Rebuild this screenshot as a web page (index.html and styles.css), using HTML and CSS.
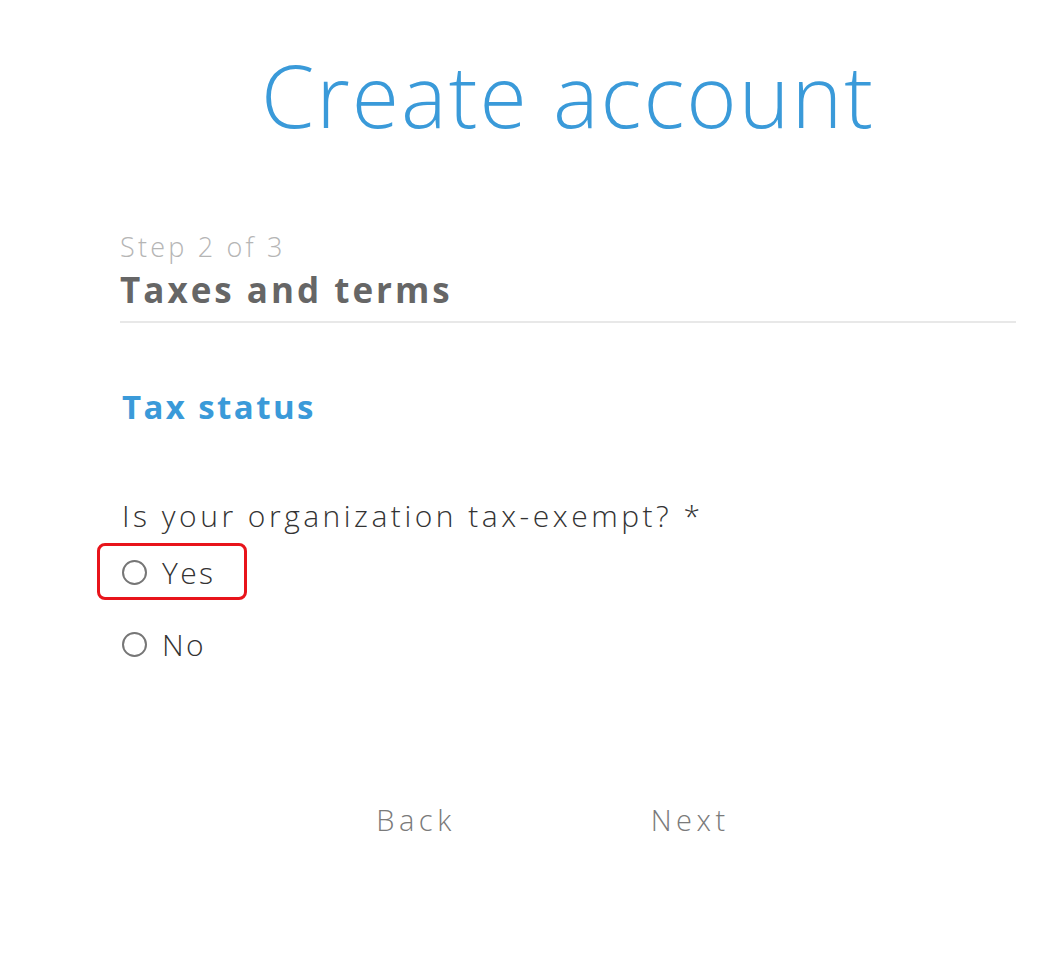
FILE: index.html
```html
<!DOCTYPE html>
<html lang="en">
<head>
<meta charset="utf-8">
<title>Create account</title>
<link rel="stylesheet" href="styles.css">
</head>
<body>
<main class="page">
  <h1 class="title">Create account</h1>
  <header class="step">
    <div class="step-count">Step 2 of 3</div>
    <h2 class="step-name">Taxes and terms</h2>
  </header>
  <section class="section">
    <h3 class="section-title">Tax status</h3>
    <fieldset class="question">
      <legend class="question-label">Is your organization tax-exempt? *</legend>
      <label class="option option-highlight"><span class="radio"></span><span class="option-text">Yes</span></label>
      <label class="option"><span class="radio"></span><span class="option-text">No</span></label>
    </fieldset>
  </section>
  <nav class="actions">
    <button class="btn" type="button">Back</button>
    <button class="btn" type="button">Next</button>
  </nav>
</main>
</body>
</html>
```

FILE: styles.css
```css
html, body {
  margin: 0;
  padding: 0;
  background: #ffffff;
}
body {
  font-family: "Open Sans", "Noto Sans", sans-serif;
  width: 1056px;
  height: 956px;
  overflow: hidden;
}
.page {
  margin-left: 120px;
  width: 896px;
  display: flex;
  flex-direction: column;
}
.title {
  margin: 40px 0 0;
  text-align: center;
  font-weight: 300;
  font-size: 86px;
  line-height: 110px;
  color: #3a9ad9;
  letter-spacing: 2px;
}
.step {
  margin-top: 80px;
  padding-bottom: 9px;
  border-bottom: 2px solid #e8e8e8;
}
.step-count {
  font-size: 27px;
  font-weight: 300;
  line-height: 34px;
  color: #b5b5b5;
  letter-spacing: 3.2px;
}
.step-name {
  margin: 4px 0 0;
  font-size: 35px;
  font-weight: 700;
  line-height: 44px;
  color: #666666;
  letter-spacing: 3px;
}
.section {
  padding-left: 2px;
}
.section-title {
  margin: 62px 0 0;
  font-size: 33px;
  font-weight: 700;
  line-height: 44px;
  color: #3a9ad9;
  letter-spacing: 2.4px;
}
.question {
  margin: 0;
  padding: 0;
  border: 0;
  display: flex;
  flex-direction: column;
}
.question-label {
  padding: 0;
  margin-top: 67px;
  font-size: 30px;
  font-weight: 300;
  line-height: 40px;
  color: #333333;
  letter-spacing: 3.5px;
  float: left;
  width: 100%;
}
.option {
  display: flex;
  align-items: center;
  gap: 15px;
  height: 56px;
  font-size: 30px;
  font-weight: 300;
  color: #333333;
  letter-spacing: 2.4px;
  width: max-content;
  padding: 0 24px 0 0;
  box-sizing: border-box;
}
.option + .option {
  margin-top: 16px;
}
.option-highlight {
  position: relative;
  margin-top: 8px;
}
.option-highlight::before {
  content: "";
  position: absolute;
  left: -25px;
  top: -1px;
  width: 150px;
  height: 57px;
  border: 3px solid #e8141b;
  border-radius: 8px;
  box-sizing: border-box;
}
.radio {
  width: 25px;
  height: 25px;
  border: 2px solid #767676;
  border-radius: 50%;
  box-sizing: border-box;
  flex: none;
  margin-top: 1px;
}
.actions {
  margin-top: 128px;
  display: flex;
  justify-content: center;
  gap: 195px;
  padding-right: 30px;
}
.btn {
  background: none;
  border: 0;
  padding: 0;
  font-family: inherit;
  font-size: 29px;
  font-weight: 300;
  color: #7a7a7a;
  letter-spacing: 4.5px;
  cursor: pointer;
}
```
